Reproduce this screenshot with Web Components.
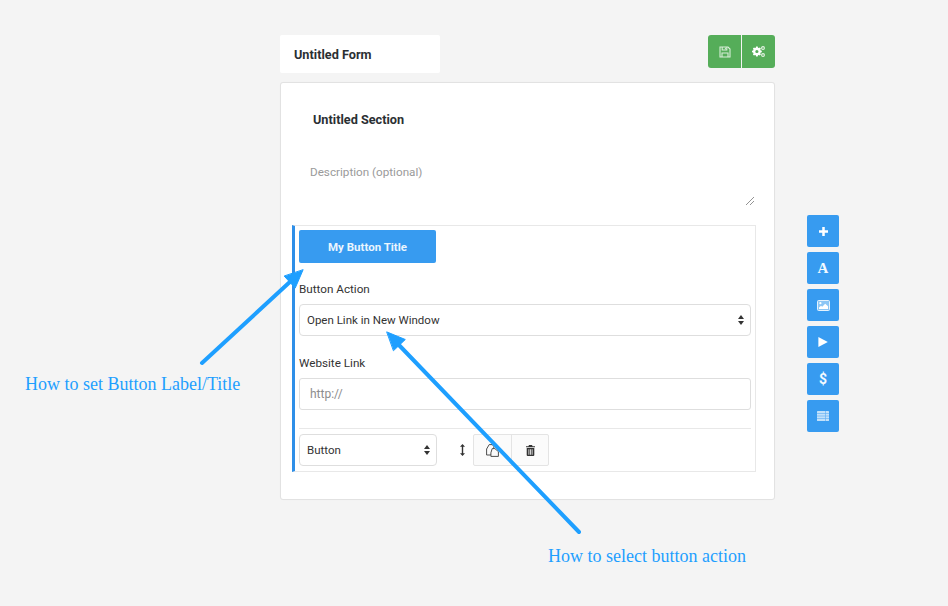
<!DOCTYPE html>
<html lang="en">
<head>
<meta charset="utf-8">
<title>Form builder</title>
<style>
html,body{margin:0;padding:0;background:#f4f4f4;font-family:Roboto,"Liberation Sans",sans-serif}
</style>
</head>
<body>
<fb-page>
  <fb-header slot="header">
    <fb-title>Untitled Form</fb-title>
    <fb-actions>
      <fb-action icon="save"></fb-action>
      <fb-action icon="cogs"></fb-action>
    </fb-actions>
  </fb-header>
  <fb-card slot="card">
    <fb-section name="Untitled Section" description="Description (optional)"></fb-section>
    <fb-block>
      <fb-primary>My Button Title</fb-primary>
      <fb-field label="Button Action" style="margin-top:19px"><fb-control type="select">Open Link in New Window</fb-control></fb-field>
      <fb-field label="Website Link" style="margin-top:20px"><fb-control type="input">http://</fb-control></fb-field>
      <fb-footer slot="footer">
        <fb-control type="select" style="width:138px">Button</fb-control>
        <fb-move></fb-move>
        <fb-group><fb-tool icon="copy"></fb-tool><fb-tool icon="trash"></fb-tool></fb-group>
      </fb-footer>
    </fb-block>
  </fb-card>
  <fb-side slot="side">
    <fb-side-btn icon="plus"></fb-side-btn>
    <fb-side-btn glyph="A" glyphfont="serif"></fb-side-btn>
    <fb-side-btn icon="image"></fb-side-btn>
    <fb-side-btn icon="play"></fb-side-btn>
    <fb-side-btn glyph="$"></fb-side-btn>
    <fb-side-btn icon="table"></fb-side-btn>
  </fb-side>
  <fb-annotations slot="overlay"></fb-annotations>
</fb-page>
<script>
const ICONS = {
  save:'<svg width="12" height="12" viewBox="0 0 12 12" fill="none" stroke="#d9eed9" stroke-width="1.1"><path d="M1 1h8l2 2v8H1z"/><path d="M3.2 1v3h4.6V1M3 11V7h6v4"/><path d="M6.4 1.7v1.6" stroke-width="1"/></svg>',
  cogs:'<svg width="13" height="11" viewBox="0 0 13 11"><g fill="#fff"><path fill-rule="evenodd" d="M3.5 1.6h1.6l.3 1.1.8.4 1-.6 1.1 1.1-.6 1 .4.8 1.1.3v1.6l-1.1.3-.4.8.6 1-1.1 1.1-1-.6-.8.4-.3 1.1H3.5l-.3-1.1-.8-.4-1 .6L.3 9.4l.6-1-.4-.8-1.1-.3V5.7l1.1-.3.4-.8-.6-1 1.1-1.1 1 .6.8-.4zM4.3 4.9a1.6 1.6 0 1 0 0 3.2 1.6 1.6 0 0 0 0-3.2z" transform="translate(.6 -1)"/></g><g fill="none" stroke="#e6f3e6" stroke-width="1.1"><circle cx="11" cy="2" r="1.4"/><circle cx="11" cy="9" r="1.4"/></g></svg>',
  plus:'<svg width="9" height="9" viewBox="0 0 10 10"><path fill="#fff" d="M3.6 0h2.8v3.6H10v2.8H6.4V10H3.6V6.4H0V3.6h3.6z"/></svg>',
  image:'<svg width="13" height="11" viewBox="0 0 13 11"><rect x=".5" y=".5" width="12" height="10" rx="1" fill="#8cc6f5" stroke="#e4f2fd"/><circle cx="3.4" cy="3.2" r="1.1" fill="#fff"/><path fill="#fff" d="M2 9V7.4l2-1.6 1.2 1 3-3L11 6.2V9z"/></svg>',
  play:'<svg width="10" height="10" viewBox="0 0 10 10"><path fill="#fff" d="M.4 0l9.4 5-9.4 5z"/></svg>',
  table:'<svg width="12" height="10" viewBox="0 0 12 10"><rect width="12" height="10" rx=".6" fill="#c2e1fa"/><path stroke="#69b3f3" stroke-width=".7" d="M0 2.5h12M0 5h12M0 7.5h12M8.5 0v10"/></svg>',
  copy:'<svg width="13" height="13" viewBox="0 0 13 13" fill="#fbfbfb" stroke="#444" stroke-width=".95"><path d="M3.2.6h3l1.6 1.7v4.3l-3 4.4H.6V5z"/><path d="M6.2 4.6h2.7l3.5 3v4.8H4.9V8.8z"/></svg>',
  trash:'<svg width="9" height="11" viewBox="0 0 9 11"><path fill="#333" fill-rule="evenodd" d="M3 0h3l.6 1.2H9v1H0v-1h2.4zM.7 2.9h7.6V10a1 1 0 0 1-1 1H1.7a1 1 0 0 1-1-1zM2.5 4.2v5.5h.8V4.2zm1.6 0v5.5h.8V4.2zm1.6 0v5.5h.8V4.2z"/></svg>'
};
function def(name, css, html){
  const cls = class extends HTMLElement{
    constructor(){super();this.attachShadow({mode:'open'});}
    connectedCallback(){
      const body = typeof html==='function'?html(this):html;
      this.shadowRoot.innerHTML='<style>'+css+'</style>'+body;
    }
  };
  customElements.define(name,cls);
}
def('fb-page',
 `:host{display:block;position:relative;width:948px;height:606px;overflow:hidden;background:#f4f4f4;font-family:Roboto,"Liberation Sans",sans-serif;color:#333}
  .wrap{display:flex;align-items:flex-start;padding:35px 0 0 280px;gap:32px}
  .main{width:495px;display:flex;flex-direction:column;gap:9px}
  .side{padding-top:180px}`,
 `<div class="wrap"><div class="main"><slot name="header"></slot><slot name="card"></slot></div><div class="side"><slot name="side"></slot></div></div><slot name="overlay"></slot>`);
def('fb-header',`:host{display:flex;justify-content:space-between;align-items:flex-start;height:38px}`,`<slot></slot>`);
def('fb-title',`:host{display:flex;align-items:center;box-sizing:border-box;width:160px;height:38px;padding-left:14px;background:#fff;border-radius:2px;font-size:12.7px;font-weight:700;color:#2b2f33}`,`<slot></slot>`);
def('fb-actions',`:host{display:flex;gap:1px;background:#f4f4f4;border-radius:3px;overflow:hidden}`,`<slot></slot>`);
def('fb-action',`:host{display:flex;align-items:center;justify-content:center;width:33px;height:33px;background:#55ad59}`,h=>ICONS[h.getAttribute('icon')]);
def('fb-card',`:host{display:block;box-sizing:border-box;width:495px;height:418px;background:#fff;border:1px solid #e2e2e2;border-radius:3px;padding:0 18px 0 11px;box-shadow:0 0 1px rgba(0,0,0,.04)}`,`<slot></slot>`);
def('fb-section',
 `:host{display:block;position:relative;height:142px}
  .n{padding:30px 0 0 21px;font-size:12.7px;font-weight:700;color:#2b2f33;line-height:14px}
  .d{padding:38px 0 0 18px;font-size:11.7px;color:#9a9a9a;line-height:15px}
  svg{position:absolute;right:2px;bottom:20px}`,
 h=>`<div class="n">${h.getAttribute('name')}</div><div class="d">${h.getAttribute('description')}</div><svg width="8" height="8" viewBox="0 0 8 8" stroke="#777" stroke-width=".8"><path d="M0 8l8-8M4 8l4-4"/></svg>`);
def('fb-block',
 `:host{display:block;box-sizing:border-box;height:247px;border:1px solid #e8e8e8;border-left:3px solid #2e8fe8;padding:4px 4px 0 4px}`,
 `<slot></slot><slot name="footer"></slot>`);
def('fb-primary',
 `:host{display:flex;align-items:center;justify-content:center;width:137px;height:33px;background:#379bf0;border-radius:2px;color:#eaf5fe;font-size:11.5px;font-weight:700}`,`<slot></slot>`);
def('fb-field',
 `:host{display:block}
  .l{font-size:11.7px;line-height:14px;color:#333;margin-bottom:8px}`,
 h=>`<div class="l">${h.getAttribute('label')}</div><slot></slot>`);
def('fb-control',
 `:host{display:flex;align-items:center;box-sizing:border-box;height:32px;background:#fff;border:1px solid #dedede;border-radius:4px;font-size:11.5px;color:#333;padding:0 7px;justify-content:space-between}
  :host([type=input]){color:#8d8d8d;padding-left:10px;border-radius:3px;font-size:12px}
  svg{flex:none;margin-right:-1px}`,
 h=>`<span><slot></slot></span>`+(h.getAttribute('type')==='select'?`<svg width="6" height="10" viewBox="0 0 6 10"><path fill="#333" d="M3 0l3 4H0zM3 10L0 6h6z"/></svg>`:''));
def('fb-footer',
 `:host{display:flex;align-items:flex-start;margin-top:18px;border-top:1px solid #e8e8e8;padding-top:5px}`,`<slot></slot>`);
def('fb-move',
 `:host{display:flex;align-items:center;justify-content:flex-end;box-sizing:border-box;width:36px;height:32px;padding-right:8px}`,
 `<svg width="5" height="12" viewBox="0 0 5 12"><path fill="#333" d="M2.5 0L5 2.8H3.2v6.4H5L2.5 12 0 9.2h1.8V2.8H0z"/></svg>`);
def('fb-group',`:host{display:flex;border:1px solid #e4e4e4;border-radius:2px;background:#fbfbfb}`,`<slot></slot>`);
def('fb-tool',
 `:host{display:flex;align-items:center;justify-content:center;box-sizing:border-box;width:37px;height:30px}
  :host(:not(:first-child)){border-left:1px solid #e4e4e4}`,
 h=>ICONS[h.getAttribute('icon')]);
def('fb-side',`:host{display:flex;flex-direction:column;gap:5px}`,`<slot></slot>`);
def('fb-side-btn',
 `:host{display:flex;align-items:center;justify-content:center;width:32px;height:32px;background:#379bf0;border-radius:2px;color:#f2f9ff;font:700 14px Roboto,"Liberation Sans",sans-serif}
  :host([glyphfont=serif]){font:700 15px "Liberation Serif",serif}`,
 h=>h.hasAttribute('icon')?ICONS[h.getAttribute('icon')]:`<span>${h.getAttribute('glyph')}</span>`);
def('fb-annotations',
 `:host{position:absolute;inset:0;display:block;pointer-events:none}
  svg{position:absolute;left:0;top:0}
  .t{position:absolute;font:18px/22px "Liberation Serif",serif;color:#1e9fff;white-space:nowrap}`,
 `<svg width="948" height="606" viewBox="0 0 948 606">
   <g fill="#1e9fff" stroke="#1e9fff" stroke-linecap="round">
     <path d="M202 363L292 280" stroke-width="4" fill="none"/>
     <path d="M303 270L295.2 288.1L284.4 276.3z" stroke-width="1"/>
     <path d="M579 532L397 343" stroke-width="4" fill="none"/>
     <path d="M387 332L405.3 339.5L393.7 350.5z" stroke-width="1"/>
   </g>
 </svg>
 <div class="t" style="left:25px;top:373px">How to set Button Label/Title</div>
 <div class="t" style="left:548px;top:545px">How to select button action</div>`);
</script>
</body>
</html>
